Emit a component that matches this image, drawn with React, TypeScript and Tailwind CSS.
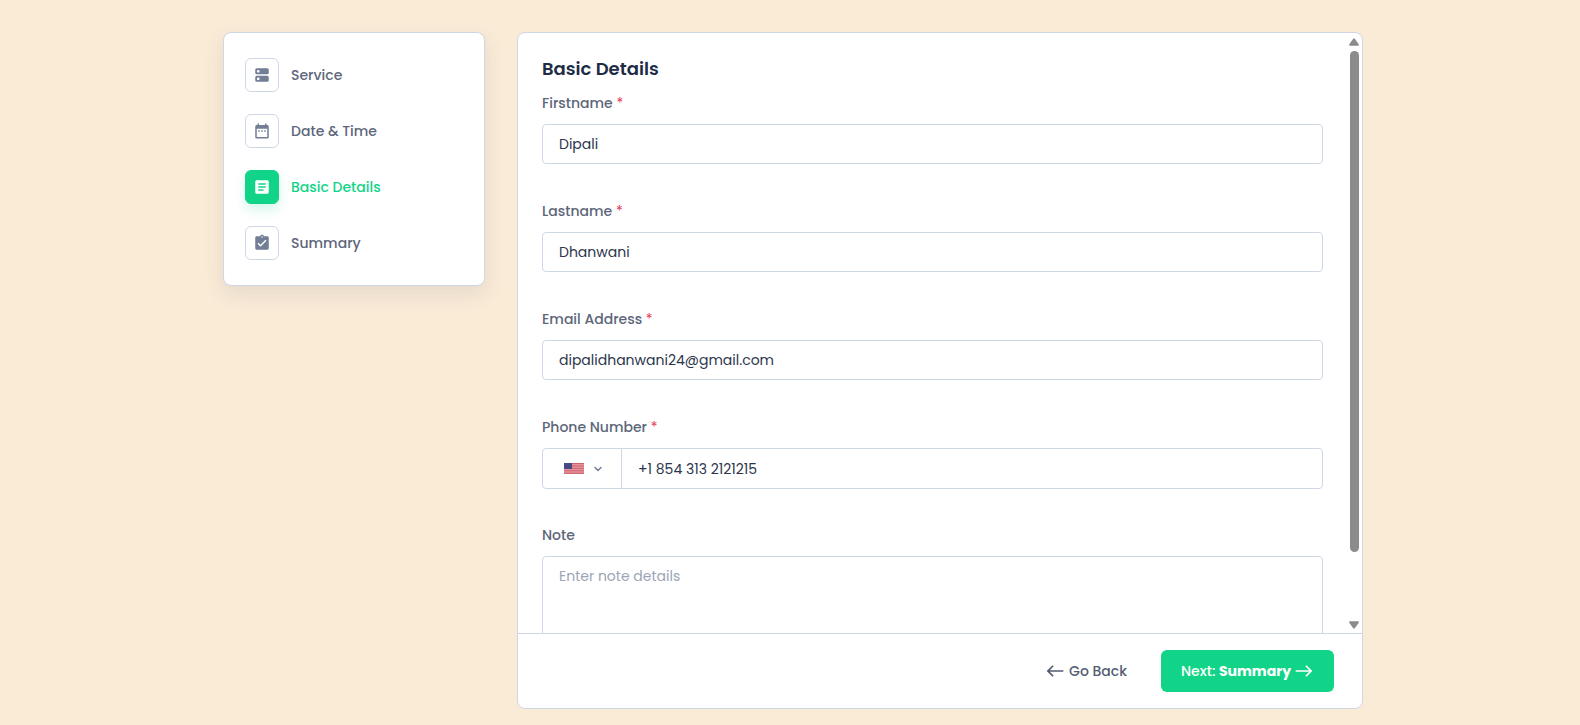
import { useState } from "react";
import { ChevronDown } from "lucide-react";
import {
  MdArticle,
  MdAssignmentTurnedIn,
  MdDateRange,
  MdEast,
  MdWest,
} from "react-icons/md";
import clsx from "clsx";

function ServiceIcon({ size }: { size: number }) {
  return (
    <svg width={size} height={size} viewBox="0 0 24 24" fill="currentColor">
      <path
        fillRule="evenodd"
        d="M5 3h14a2 2 0 0 1 2 2v4a2 2 0 0 1-2 2H5a2 2 0 0 1-2-2V5a2 2 0 0 1 2-2zm2 2.200a1.900 1.900 0 1 0 0 3.800 1.900 1.900 0 0 0 0-3.800zM5 13h14a2 2 0 0 1 2 2v4a2 2 0 0 1-2 2H5a2 2 0 0 1-2-2v-4a2 2 0 0 1 2-2zm2 2.200a1.900 1.900 0 1 0 0 3.800 1.900 1.900 0 0 0 0-3.800z"
      />
    </svg>
  );
}

const steps = [
  { id: "service", label: "Service", icon: ServiceIcon },
  { id: "datetime", label: "Date & Time", icon: MdDateRange },
  { id: "details", label: "Basic Details", icon: MdArticle },
  { id: "summary", label: "Summary", icon: MdAssignmentTurnedIn },
];

const fields = [
  { id: "firstname", label: "Firstname", type: "text", value: "Dipali" },
  { id: "lastname", label: "Lastname", type: "text", value: "Dhanwani" },
  {
    id: "email",
    label: "Email Address",
    type: "email",
    value: "dipalidhanwani24@gmail.com",
  },
];

function FieldLabel({
  htmlFor,
  text,
  required,
}: {
  htmlFor: string;
  text: string;
  required?: boolean;
}) {
  return (
    <label
      htmlFor={htmlFor}
      className="block mb-2.5 text-sm leading-[21px] font-medium text-[#5d6679]"
    >
      {text}
      {required && <span className="font-normal text-[#e63757]"> *</span>}
    </label>
  );
}

function UsFlag() {
  return (
    <svg width="20" height="11" viewBox="0 0 20 11" aria-hidden="true">
      <rect width="20" height="11" fill="#eba9b0" />
      <path
        d="M0 .5h20M0 2.2h20M0 3.9h20M0 5.6h20M0 7.3h20M0 9h20M0 10.6h20"
        stroke="#cf5a68"
        strokeWidth="0.9"
      />
      <rect width="8" height="6" fill="#474a80" />
    </svg>
  );
}

function ScrollTrack() {
  return (
    <div
      className="w-4 shrink-0 flex flex-col items-center pt-[5px] pb-1"
      aria-hidden="true"
    >
      <svg width="10" height="8" viewBox="0 0 10 8" fill="#8b8b8b">
        <path d="M4 .9a1.300 1.300 0 0 1 2 0L9.700 6.200a1.100 1.100 0 0 1-.9 1.600H1.200a1.100 1.100 0 0 1-.9-1.600z" />
      </svg>
      <div className="flex-1 w-full flex justify-center pt-[5px] pb-1">
        <div className="h-[88.5%] w-[9px] rounded-full bg-[#8b8b8b]" />
      </div>
      <svg width="10" height="8" viewBox="0 0 10 8" fill="#8b8b8b">
        <path d="M4 7.100a1.300 1.300 0 0 0 2 0L9.700 1.800A1.100 1.100 0 0 0 8.800.2H1.200a1.100 1.100 0 0 0-.9 1.600z" />
      </svg>
    </div>
  );
}

export default function App() {
  const [active, setActive] = useState("details");

  return (
    <div className="min-h-screen bg-[#faebd7] pt-8 pb-4 pl-1.5 font-['Poppins','Inter',sans-serif]">
      <div className="max-w-[1140px] mx-auto flex items-start gap-8">
        {/* Steps */}
        <nav className="w-[262px] shrink-0 flex flex-col gap-[22px] rounded-lg border border-[#cfd6e5] bg-white px-[21px] py-[25px] shadow-[0_8px_20px_rgba(83,93,113,0.12)]">
          {steps.map(({ id, label, icon: Icon }) => (
            <button
              key={id}
              type="button"
              onClick={() => setActive(id)}
              className="flex items-center gap-3 text-left"
            >
              <span
                className={clsx(
                  "size-[34px] flex items-center justify-center rounded-md border",
                  active === id
                    ? "border-[#12d488] bg-[#12d488] text-white shadow-[0_6px_12px_rgba(18,212,136,0.18)]"
                    : "border-[#cfd6e5] bg-white text-[#727e95]"
                )}
              >
                <Icon size={18} />
              </span>
              <span
                className={clsx(
                  "text-sm font-medium",
                  active === id ? "text-[#12d488]" : "text-[#5d6679]"
                )}
              >
                {label}
              </span>
            </button>
          ))}
        </nav>

        {/* Form */}
        <form
          onSubmit={(e) => e.preventDefault()}
          className="flex-1 min-w-0 h-[calc(100vh-48px)] flex flex-col overflow-hidden rounded-lg border border-[#cfd6e5] bg-white"
        >
          <div className="flex-1 min-h-0 flex">
            <div className="flex-1 min-w-0 overflow-y-auto [scrollbar-width:none] pt-[22px] pb-6 pl-6 pr-[23px]">
              <h1 className="mb-2.5 text-lg leading-7 font-semibold text-[#202c45]">
                Basic Details
              </h1>

              {fields.map((field) => (
                <div key={field.id} className="mb-[37px]">
                  <FieldLabel htmlFor={field.id} text={field.label} required />
                  <input
                    id={field.id}
                    type={field.type}
                    defaultValue={field.value}
                    className="block w-full h-10 rounded border border-[#cfd6e5] px-4 text-sm text-[#2c364c] outline-none focus:border-[#12d488]"
                  />
                </div>
              ))}

              <div className="mb-9">
                <FieldLabel htmlFor="phone" text="Phone Number" required />
                <div className="flex h-[41px] rounded border border-[#cfd6e5]">
                  <div className="relative w-[79px] shrink-0 flex items-center justify-center gap-2 border-r border-[#cfd6e5] pl-1 text-[#727e95]">
                    <UsFlag />
                    <ChevronDown size={12} strokeWidth={3} />
                    <select
                      aria-label="Country"
                      defaultValue="us"
                      className="absolute inset-0 opacity-0 cursor-pointer"
                    >
                      <option value="us">+1</option>
                    </select>
                  </div>
                  <input
                    id="phone"
                    type="tel"
                    defaultValue="+1 854 313 2121215"
                    className="flex-1 min-w-0 px-4 text-sm text-[#2c364c] outline-none"
                  />
                </div>
              </div>

              <FieldLabel htmlFor="note" text="Note" />
              <textarea
                id="note"
                placeholder="Enter note details"
                className="block w-full h-32 resize-none rounded border border-[#cfd6e5] px-4 py-[9px] text-sm text-[#2c364c] placeholder:text-[#9ca4b5] outline-none"
              />
            </div>
            <ScrollTrack />
          </div>

          {/* Footer */}
          <div className="flex items-center justify-end gap-[34px] border-t border-[#cfd6e5] py-4 pr-7">
            <button
              type="button"
              className="flex items-center gap-1 text-sm font-medium text-[#535d71]"
            >
              <MdWest size={20} />
              Go Back
            </button>
            <button
              type="submit"
              className="h-[42px] flex items-center gap-[3px] rounded-md bg-[#12d488] px-5 text-sm font-medium text-white"
            >
              <span>
                Next: <strong className="font-bold">Summary</strong>
              </span>
              <MdEast size={20} />
            </button>
          </div>
        </form>
      </div>
    </div>
  );
}
